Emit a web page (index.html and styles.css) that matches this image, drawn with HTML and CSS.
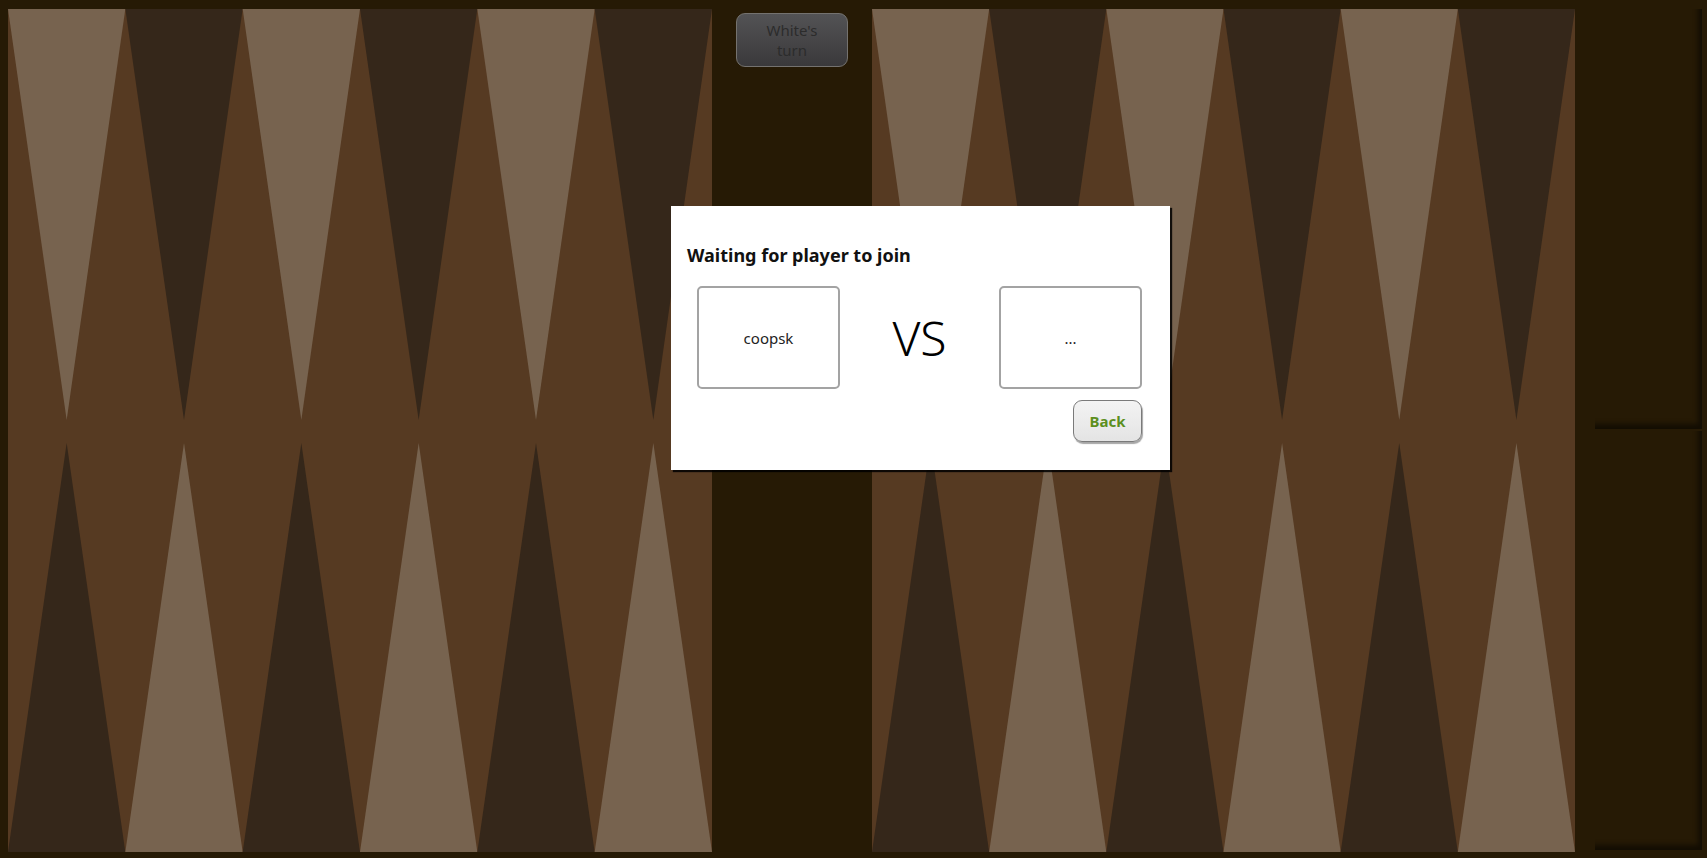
FILE: index.html
```html
<!DOCTYPE html>
<html>
<head>
<meta charset="utf-8">
<link rel="stylesheet" href="styles.css">
</head>
<body>
<div class="table">
  <div class="board">
    <svg viewBox="0 0 704 843" preserveAspectRatio="none" class="points">
      <rect width="704" height="843" fill="#563a22"/>
      <polygon points="0,0 117.33,0 58.67,411" class="light"/>
      <polygon points="117.33,0 234.67,0 176,411" class="dark"/>
      <polygon points="234.67,0 352,0 293.33,411" class="light"/>
      <polygon points="352,0 469.33,0 410.67,411" class="dark"/>
      <polygon points="469.33,0 586.67,0 528,411" class="light"/>
      <polygon points="586.67,0 704,0 645.33,411" class="dark"/>
      <polygon points="0,843 117.33,843 58.67,434" class="dark"/>
      <polygon points="117.33,843 234.67,843 176,434" class="light"/>
      <polygon points="234.67,843 352,843 293.33,434" class="dark"/>
      <polygon points="352,843 469.33,843 410.67,434" class="light"/>
      <polygon points="469.33,843 586.67,843 528,434" class="dark"/>
      <polygon points="586.67,843 704,843 645.33,434" class="light"/>
    </svg>
  </div>
  <div class="bar">
    <div class="turn">White's<br>turn</div>
  </div>
  <div class="board board-right">
    <svg viewBox="0 0 703 843" preserveAspectRatio="none" class="points">
      <rect width="703" height="843" fill="#563a22"/>
      <polygon points="0,0 117.17,0 58.58,411" class="light"/>
      <polygon points="117.17,0 234.33,0 175.75,411" class="dark"/>
      <polygon points="234.33,0 351.5,0 292.92,411" class="light"/>
      <polygon points="351.5,0 468.67,0 410.08,411" class="dark"/>
      <polygon points="468.67,0 585.83,0 527.25,411" class="light"/>
      <polygon points="585.83,0 703,0 644.42,411" class="dark"/>
      <polygon points="0,843 117.17,843 58.58,434" class="dark"/>
      <polygon points="117.17,843 234.33,843 175.75,434" class="light"/>
      <polygon points="234.33,843 351.5,843 292.92,434" class="dark"/>
      <polygon points="351.5,843 468.67,843 410.08,434" class="light"/>
      <polygon points="468.67,843 585.83,843 527.25,434" class="dark"/>
      <polygon points="585.83,843 703,843 644.42,434" class="light"/>
    </svg>
  </div>
  <div class="tray">
    <div class="tray-slot"></div>
    <div class="tray-slot"></div>
  </div>
</div>

<div class="dialog">
  <h2 class="dialog-title">Waiting for player to join</h2>
  <div class="versus">
    <div class="player">coopsk</div>
    <div class="vs">VS</div>
    <div class="player">...</div>
  </div>
  <div class="actions">
    <button class="back">Back</button>
  </div>
</div>
</body>
</html>
```

FILE: styles.css
```css
html, body {
  margin: 0;
  padding: 0;
  background: #261a05;
  width: 1707px;
  height: 858px;
  overflow: hidden;
  font-family: "Noto Sans", "Open Sans", sans-serif;
}

.table {
  display: flex;
  padding: 9px 0 6px 8px;
  height: 843px;
}

.board {
  width: 704px;
  height: 843px;
  flex: none;
}

.board-right {
  width: 703px;
}

.points {
  display: block;
  width: 100%;
  height: 100%;
}

.light { fill: #77634f; }
.dark { fill: #35271a; }

.bar {
  width: 160px;
  flex: none;
  display: flex;
  justify-content: center;
  align-items: flex-start;
  padding-top: 4px;
}

.turn {
  box-sizing: border-box;
  width: 112px;
  height: 54px;
  border: 1px solid #74726f;
  border-radius: 9px;
  background: linear-gradient(#535355, #3a393b);
  color: #2c2c2c;
  font-size: 15px;
  line-height: 20px;
  text-align: center;
  padding-top: 6px;
}

.tray {
  flex: none;
  width: 132px;
  display: flex;
  flex-direction: column;
  padding: 0 5px 0 20px;
  box-sizing: border-box;
}

.tray-slot {
  flex: 1;
  background: #261a05;
  box-shadow: inset -5px -6px 5px -1px rgba(0, 0, 0, 0.5);
  margin-bottom: 2px;
}

.dialog {
  position: absolute;
  left: 671px;
  top: 206px;
  width: 499px;
  height: 264px;
  box-sizing: border-box;
  background: #ffffff;
  box-shadow: 2px 2px 1px rgba(0, 0, 0, 0.85);
  padding: 37px 28px 0 26px;
}

.dialog-title {
  margin: 0 0 0 -10px;
  font-size: 18px;
  font-weight: 700;
  color: #111;
  line-height: 24px;
}

.versus {
  display: flex;
  justify-content: space-between;
  align-items: center;
  margin-top: 19px;
}

.player {
  box-sizing: border-box;
  width: 143px;
  height: 103px;
  border: 2px solid #a3a3a3;
  border-radius: 5px;
  display: flex;
  align-items: center;
  justify-content: center;
  font-size: 15px;
  color: #222;
}

.vs {
  font-size: 48px;
  font-weight: 300;
  color: #000;
  line-height: 1;
}

.actions {
  display: flex;
  justify-content: flex-end;
  margin-top: 11px;
}

.back {
  box-sizing: border-box;
  width: 69px;
  height: 42px;
  border: 1px solid #7a7a7a;
  border-radius: 9px;
  background: linear-gradient(#f3f3f3, #e4e4e4);
  box-shadow: 1px 2px 1px rgba(0, 0, 0, 0.35);
  color: #5c8f1e;
  font-family: "Noto Sans", "Open Sans", sans-serif;
  font-weight: 700;
  font-size: 15px;
  padding: 0;
}
```
